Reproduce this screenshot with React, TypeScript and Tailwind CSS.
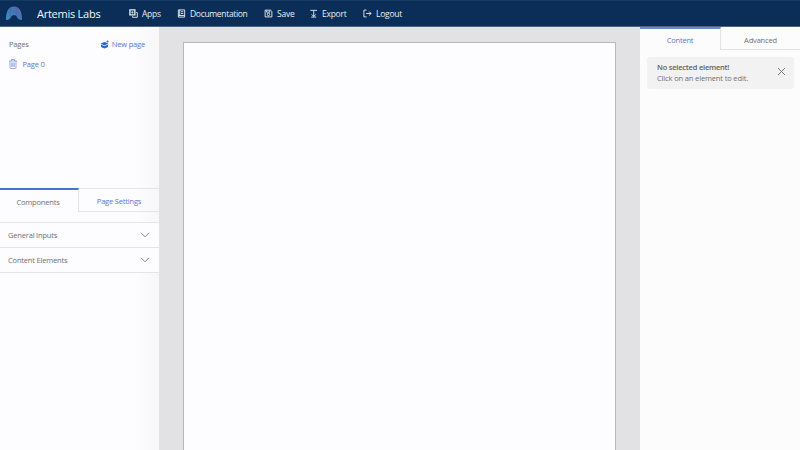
import type { ReactNode } from "react";

function Svg({ children }: { children: ReactNode }) {
  return (
    <svg width="9" height="9" viewBox="0 0 20 20" fill="none" stroke="currentColor" strokeWidth="2" className="shrink-0">
      {children}
    </svg>
  );
}

const AppsIcon = () => (
  <Svg>
    <path d="M2 2h11v11H2z" strokeWidth="3" />
    <path d="M7.500 5v5M5 7.500h5" />
    <path d="M16 8h2.500v10.500H8V16" />
  </Svg>
);
const DocIcon = () => (
  <Svg>
    <path d="M3 2h14v16H3zM6 2v13M3 14.500h14M9 6h5M9 10h5" />
  </Svg>
);
const SaveIcon = () => (
  <Svg>
    <path d="M2.500 2.500h12l3 3v12h-15zM6 3v4h7V3" />
    <circle cx="10" cy="12" r="2.700" />
  </Svg>
);
const ExportIcon = () => (
  <Svg>
    <path d="M3 3h15M10.500 3v14M6 12l4.500 4.500L15 12M5 18h11" />
  </Svg>
);
const LogoutIcon = () => (
  <Svg>
    <path d="M8 2.500H2v15h6M7 10h11M13.500 5.500L18 10l-4.500 4.500" />
  </Svg>
);

function NavItem({ icon, label, className }: { icon: ReactNode; label: string; className: string }) {
  return (
    <a className={`flex shrink-0 items-center gap-1 whitespace-nowrap ${className}`}>
      {icon}
      <span>{label}</span>
    </a>
  );
}

function Chevron() {
  return (
    <svg width="10" height="6" viewBox="0 0 10 6" fill="none" stroke="#858585" strokeWidth="1">
      <path d="M1 .8l4 4 4-4" />
    </svg>
  );
}

function AccordionRow({ label }: { label: string }) {
  return (
    <div className="flex h-[25px] items-center justify-between border-b border-[#e5e5e8] bg-[#fdfcfe] pr-[9px] pb-px pl-2">
      <span>{label}</span>
      <Chevron />
    </div>
  );
}

export default function App() {
  return (
    <div className="flex h-[450px] w-[800px] flex-col overflow-hidden bg-[#fdfcfe] font-['Open_Sans','Noto_Sans',sans-serif] text-[7.5px] leading-[10px] tracking-[-0.18px] text-[#707070]">
      <header className="flex h-[27px] shrink-0 items-center border-t border-b border-t-[#173a61] border-b-[#496687] bg-[#0a2e57] pl-[6px] text-[8.5px] font-medium tracking-[-0.25px] text-[#e6edf5]">
        <svg width="17" height="15" viewBox="0 0 17 15" className="shrink-0">
          <defs>
            <linearGradient id="arc" x1="0" y1="1" x2="1" y2="0">
              <stop offset="0" stopColor="#3992c9" />
              <stop offset=".55" stopColor="#4674b5" />
              <stop offset="1" stopColor="#6868b0" />
            </linearGradient>
          </defs>
          <path d="M0 14C0 6 2 .5 8 .5S16 6 16 14c-3 0-4-1.200-5-3-.8-1.300-1.500-2-3-2s-2.200.7-3 2c-1 1.800-2 3-5 3z" fill="url(#arc)" />
          <path d="M5 1.500c-1 3-1.500 5-.5 9M10.500 1c-1 3-.5 6 1.500 9.500" fill="none" stroke="#284f91" strokeWidth="1" opacity=".25" />
        </svg>
        <span className="ml-[14px] w-[92px] text-[11px] tracking-[-0.25px] whitespace-nowrap text-[#f2f6fa]">Artemis Labs</span>
        <NavItem icon={<AppsIcon />} label="Apps" className="w-[48px]" />
        <NavItem icon={<DocIcon />} label="Documentation" className="w-[87px] tracking-[-0.32px]" />
        <NavItem icon={<SaveIcon />} label="Save" className="w-[45px]" />
        <NavItem icon={<ExportIcon />} label="Export" className="w-[54px]" />
        <NavItem icon={<LogoutIcon />} label="Logout" className="" />
      </header>

      <div className="flex min-h-0 flex-1">
        <aside className="flex w-[159px] shrink-0 flex-col bg-linear-to-r from-[#fdfcfe] from-85% to-[#f7f7f8]">
          <section className="h-[161px] pt-3 pl-[9px]">
            <div className="flex h-[10px] items-center justify-between pr-[14px]">
              <span className="pb-px">Pages</span>
              <a className="flex items-center gap-[3px] text-[#5878ce]">
                <svg width="9" height="9" viewBox="0 0 18 18" fill="#2867ce">
                  <path d="M9 4l8 3-8 4-8-4z" />
                  <path d="M2 9l7 3.500L16 9v5l-7 3-7-3z" />
                  <path d="M13 3h4M15 1v4" stroke="#2867ce" strokeWidth="1.800" />
                </svg>
                <span>New page</span>
              </a>
            </div>
            <a className="mt-[10px] flex h-[10px] items-center gap-[5.5px] text-[#5878ce]">
              <svg width="8" height="10" viewBox="0 0 16 20" fill="none" stroke="#7892d4" strokeWidth="1.500">
                <path d="M0 4h16M5 4V1h6v3M2 4v13q0 2 2 2h8q2 0 2-2V4M5.500 7v9M8 7v9M10.500 7v9" />
              </svg>
              <span>Page 0</span>
            </a>
          </section>

          <div className="flex h-[24px] shrink-0">
            <div className="flex w-[79px] items-center justify-center border-t-2 border-r border-t-[#4772cf] border-r-[#e2e2e5] pt-px pr-[2px]">Components</div>
            <div className="flex flex-1 items-center justify-center border-t border-b border-[#e4e4e8] text-[#5878ce]"><span className="pt-[2px]">Page Settings</span></div>
          </div>

          <div className="mt-[10px] border-t border-[#e5e5e8]">
            <AccordionRow label="General Inputs" />
            <AccordionRow label="Content Elements" />
          </div>
        </aside>

        <main className="flex flex-1 justify-center bg-[#e2e1e4] pt-[15px] pr-px">
          <div className="w-[433px] border border-b-0 border-[#b8b8bb] bg-[#fdfcfe]" />
        </main>

        <aside className="w-[160px] shrink-0 bg-[#fcfcfd]">
          <div className="flex h-[23px]">
            <div className="flex w-[81px] items-center justify-center border-t-2 border-r border-t-[#6a88d1] border-r-[#e2e2e5] text-[#5878ce]">Content</div>
            <div className="flex flex-1 items-center justify-center border-b border-[#e2e2e5] pt-1">Advanced</div>
          </div>
          <div className="mr-[6px] mt-[7px] ml-[7px] flex h-[32px] justify-between rounded-[3px] bg-[#f2f2f3] pt-[5px] pr-[8px] pl-[10px]">
            <div className="leading-[11px] tracking-[-0.14px] whitespace-nowrap">
              <div className="font-semibold tracking-[-0.21px] text-[#626262]">No selected element!</div>
              <div>Click on an element to edit.</div>
            </div>
            <svg width="9" height="9" viewBox="0 0 9 9" stroke="#777" strokeWidth="1" className="mt-[5px]">
              <path d="M1 1l7 7M8 1L1 8" />
            </svg>
          </div>
        </aside>
      </div>
    </div>
  );
}
